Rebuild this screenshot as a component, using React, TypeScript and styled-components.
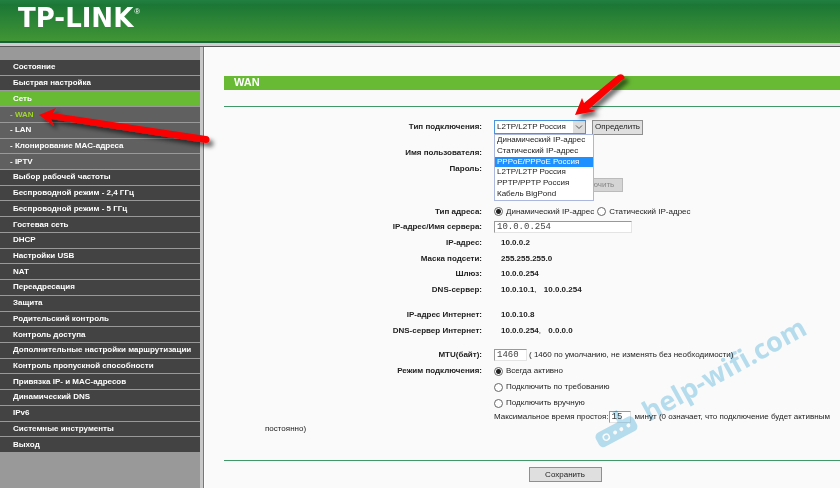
import React from 'react';
import styled, { createGlobalStyle } from 'styled-components';

const GlobalStyle = createGlobalStyle`
  * { box-sizing: border-box; }
  html { overflow: hidden; }
  body { margin: 0; background: #fafafa; color: #222; font: 8px/12px "Liberation Sans", Arial, sans-serif; }
`;

const Page = styled.div`
  position: relative;
  display: flex;
  flex-direction: column;
  min-height: 100vh;
  overflow: hidden;
`;

const Header = styled.header`
  display: flex;
  align-items: flex-start;
  height: 43px;
  padding: 3px 18px;
  background:
    linear-gradient(90deg, #17603a 0, #1b6c3c 40%, transparent 60%) bottom / 100% 2px no-repeat,
    linear-gradient(#228040 0, #1c7736 5px, #439734 100%);
`;

const Logo = styled.div`
  display: flex;
  color: #fff;
  font: bold 26px/30px "DejaVu Sans", Verdana, sans-serif;
`;

const Registered = styled.sup`
  padding: 3px 0 0 1px;
  font: 8px/12px "Liberation Sans", Arial, sans-serif;
`;

const Divider = styled.div`
  height: 4px;
  background: #cfcccf;
  border-bottom: 1px solid #555;
`;

const Body = styled.div`
  display: grid;
  grid-template-columns: 204px minmax(0, 1fr);
  flex: 1;
`;

const Sidebar = styled.nav`
  padding-top: 13px;
  background: #999;
  border-right: 1px solid #777;
  box-shadow: inset -3px 0 #c8c8c8;
`;

const Menu = styled.ul`
  display: grid;
  grid-template-columns: minmax(0, 1fr);
  grid-auto-rows: 1fr;
  row-gap: 1px;
  min-height: 392px;
  margin: 0 3px 0 0;
  padding: 0;
  list-style: none;
`;

const MenuItem = styled.li<{ $kind?: string }>`
  display: flex;
  align-items: center;
  padding-left: ${p => (p.$kind === 'sub' || p.$kind === 'current' ? 10 : 13)}px;
  background: ${p => (p.$kind === 'open' ? '#68b934' : p.$kind ? '#606060' : '#434343')};
`;

const MenuLink = styled.a<{ $current?: boolean }>`
  color: ${p => (p.$current ? '#a0d52c' : '#fff')};
  font-weight: bold;
  text-decoration: none;
  white-space: nowrap;
`;

const Main = styled.main`
  padding: 29px 0 0 19px;
  border-left: 1px solid #fff;
`;

const Title = styled.h1`
  margin: 0;
  height: 14px;
  padding-left: 10px;
  background: #68b934;
  color: #fff;
  font-size: 11px;
  line-height: 13px;
`;

const Rule = styled.hr<{ $gap: number }>`
  height: 1px;
  margin: ${p => p.$gap}px 0 0;
  border: 0;
  background: #3f9866;
`;

const Section = styled.div<{ $height: number; $gap: number }>`
  display: grid;
  grid-auto-rows: 1fr;
  min-height: ${p => p.$height}px;
  margin-top: ${p => p.$gap}px;
`;

const Row = styled.div`
  display: grid;
  grid-template-columns: 258px minmax(0, 1fr);
  column-gap: 12px;
  align-items: center;
`;

const Label = styled.label`
  font-weight: bold;
  text-align: right;
  white-space: nowrap;
`;

const Field = styled.div`
  position: relative;
  display: flex;
  align-items: center;
  white-space: nowrap;
`;

const Value = styled.output<{ $after?: boolean }>`
  padding-left: ${p => (p.$after ? 5 : 7)}px;
  font-weight: bold;
`;

const TypeSelect = styled.div`
  position: relative;
  display: flex;
  margin-right: 6px;
  svg { position: absolute; right: 1px; top: 1px; pointer-events: none; }
`;

const Select = styled.select`
  appearance: none;
  width: 92px;
  height: 14px;
  padding: 0 0 0 2px;
  border: 1px solid #4a94dc;
  border-radius: 0;
  background: #fff;
  color: #222;
  font: inherit;
`;

const Options = styled.ul`
  position: absolute;
  z-index: 2;
  top: 14px;
  left: 0;
  display: grid;
  grid-template-columns: minmax(0, 1fr);
  grid-auto-rows: 1fr;
  width: 100px;
  height: 67px;
  margin: 0;
  padding: 0;
  border: 1px solid #a9b8dc;
  background: #fff;
  list-style: none;
`;

const Option = styled.li<{ $active?: boolean }>`
  padding-left: 2px;
  background: ${p => (p.$active ? '#1e90ff' : '#fff')};
  color: ${p => (p.$active ? '#fff' : '#222')};
  line-height: 10px;
  white-space: nowrap;
`;

const Button = styled.button<{ $width: number }>`
  width: ${p => p.$width}px;
  height: 15px;
  padding: 0;
  border: 1px solid #8f8f8f;
  background: #dfdfdf;
  color: #222;
  font: inherit;
  white-space: nowrap;
  &:disabled { height: 14px; margin-left: 71px; border-color: #bbb; background: #d5d5d5; color: #888; }
`;

const Input = styled.input<{ $width: number }>`
  width: ${p => p.$width}px;
  height: 12px;
  padding: 0 2px;
  border: 1px solid #e4e4e4;
  border-top-color: #999;
  border-left-color: #999;
  background: #fff;
  color: #444;
  font: 9px/10px "Liberation Mono", "Courier New", monospace;
`;

const Choice = styled.label`
  display: inline-flex;
  align-items: center;
  gap: 3px;
  margin-right: 3px;
`;

const Radio = styled.input`
  appearance: none;
  width: 9px;
  height: 9px;
  margin: 0;
  border: 1px solid #666;
  border-radius: 50%;
  background: #fff;
  &:checked { background: radial-gradient(circle, #222 0 2px, #fff 3px); }
`;

const Hint = styled.span`
  padding-left: 2px;
`;

const IdleTime = styled.p`
  margin: 0;
  padding-left: 41px;
  text-indent: 229px;
  input { margin-right: 2px; text-indent: 0; }
`;

const Footer = styled.footer`
  display: flex;
  justify-content: center;
  padding: 6px 0 6px 66px;
`;

const Overlay = styled.svg<{ $left: number; $top: number }>`
  position: absolute;
  left: ${p => p.$left}px;
  top: ${p => p.$top}px;
  pointer-events: none;
  z-index: 3;
`;

const Watermark = styled(Overlay)`
  mix-blend-mode: multiply;
`;

const menu: [string, string?][] = [
  ['Состояние'], ['Быстрая настройка'], ['Сеть', 'open'],
  ['WAN', 'current'], ['LAN', 'sub'], ['Клонирование MAC-адреса', 'sub'], ['IPTV', 'sub'],
  ['Выбор рабочей частоты'], ['Беспроводной режим - 2,4 ГГц'], ['Беспроводной режим - 5 ГГц'],
  ['Гостевая сеть'], ['DHCP'], ['Настройки USB'], ['NAT'], ['Переадресация'], ['Защита'],
  ['Родительский контроль'], ['Контроль доступа'], ['Дополнительные настройки маршрутизации'],
  ['Контроль пропускной способности'], ['Привязка IP- и MAC-адресов'], ['Динамический DNS'],
  ['IPv6'], ['Системные инструменты'], ['Выход'],
];

const types = [
  'Динамический IP-адрес', 'Статический IP-адрес', 'PPPoE/PPPoE Россия',
  'L2TP/L2TP Россия', 'PPTP/PPTP Россия', 'Кабель BigPond',
];

function ReadOnly({ id, label, values }: { id: string; label: string; values: string[] }) {
  return (
    <Row>
      <Label htmlFor={id}>{label}</Label>
      <Field>
        <Value id={id}>{values[0]}</Value>
        {values[1] && <>,&nbsp;<Value $after>{values[1]}</Value></>}
      </Field>
    </Row>
  );
}

export default function App() {
  return (
    <Page>
      <GlobalStyle />
      <Header>
        <Logo>TP-LINK<Registered>®</Registered></Logo>
      </Header>
      <Divider />
      <Body>
        <Sidebar>
          <Menu>
            {menu.map(([name, kind]) => (
              <MenuItem key={name} $kind={kind}>
                <MenuLink href="#" $current={kind === 'current'}>
                  {kind === 'sub' || kind === 'current' ? '- ' : ''}{name}
                </MenuLink>
              </MenuItem>
            ))}
          </Menu>
        </Sidebar>
        <Main>
          <Title>WAN</Title>
          <Rule $gap={16} />
          <Section $height={16} $gap={12}>
            <Row>
              <Label htmlFor="type">Тип подключения:</Label>
              <Field>
                <TypeSelect>
                  <Select id="type" defaultValue={types[3]}>
                    {types.map(t => <option key={t}>{t}</option>)}
                  </Select>
                  <svg width="12" height="12" viewBox="0 0 12 12">
                    <rect width="12" height="12" fill="#ddd" />
                    <path d="M3 4.5 6 7.5 9 4.5" fill="none" stroke="#555" />
                  </svg>
                  <Options>
                    {types.map((t, i) => <Option key={t} $active={i === 2}>{t}</Option>)}
                  </Options>
                </TypeSelect>
                <Button type="button" $width={51}>Определить</Button>
              </Field>
            </Row>
          </Section>
          <Section $height={48} $gap={10}>
            <Row><Label>Имя пользователя:</Label></Row>
            <Row><Label>Пароль:</Label></Row>
            <Row><span /><Field><Button type="button" disabled $width={58}>Отключить</Button></Field></Row>
          </Section>
          <Section $height={94} $gap={11}>
            <Row>
              <Label as="span">Тип адреса:</Label>
              <Field>
                <Choice><Radio type="radio" name="addr" defaultChecked />Динамический IP-адрес</Choice>
                <Choice><Radio type="radio" name="addr" />Статический IP-адрес</Choice>
              </Field>
            </Row>
            <Row>
              <Label htmlFor="server">IP-адрес/Имя сервера:</Label>
              <Field><Input id="server" $width={138} defaultValue="10.0.0.254" /></Field>
            </Row>
            <ReadOnly id="ip" label="IP-адрес:" values={['10.0.0.2']} />
            <ReadOnly id="mask" label="Маска подсети:" values={['255.255.255.0']} />
            <ReadOnly id="gateway" label="Шлюз:" values={['10.0.0.254']} />
            <ReadOnly id="dns" label="DNS-сервер:" values={['10.0.10.1', '10.0.0.254']} />
          </Section>
          <Section $height={32} $gap={9}>
            <ReadOnly id="wan-ip" label="IP-адрес Интернет:" values={['10.0.10.8']} />
            <ReadOnly id="wan-dns" label="DNS-сервер Интернет:" values={['10.0.0.254', '0.0.0.0']} />
          </Section>
          <Section $height={64} $gap={8}>
            <Row>
              <Label htmlFor="mtu">MTU(байт):</Label>
              <Field>
                <Input id="mtu" $width={33} defaultValue="1460" />
                <Hint>( 1460 по умолчанию, не изменять без необходимости)</Hint>
              </Field>
            </Row>
            <Row>
              <Label as="span">Режим подключения:</Label>
              <Field><Choice><Radio type="radio" name="mode" defaultChecked />Всегда активно</Choice></Field>
            </Row>
            <Row><span /><Field><Choice><Radio type="radio" name="mode" />Подключить по требованию</Choice></Field></Row>
            <Row><span /><Field><Choice><Radio type="radio" name="mode" />Подключить вручную</Choice></Field></Row>
          </Section>
          <IdleTime>
            <label htmlFor="idle">Максимальное время простоя:</label>
            <Input id="idle" $width={22} defaultValue="15" />
            <Hint>минут (0 означает, что подключение будет активным постоянно)</Hint>
          </IdleTime>
          <Rule $gap={25} />
          <Footer><Button type="button" $width={73}>Сохранить</Button></Footer>
        </Main>
      </Body>
      <Watermark $left={590} $top={310} width="240" height="150" viewBox="590 310 240 150" fill="#b9e1f2">
        <g transform="rotate(-28 616 432)">
          <rect x="595" y="424" width="43" height="16" rx="5" />
          <path d="M622 413v12h5v-12z" />
          <circle cx="605" cy="432" r="3" fill="none" stroke="#fff" strokeWidth="1.5" />
          <circle cx="615" cy="432" r="2" fill="#fff" />
          <circle cx="622" cy="432" r="2" fill="#fff" />
          <circle cx="630" cy="432" r="2" fill="#fff" />
        </g>
        <text transform="translate(649 422) rotate(-29)" fontFamily="Open Sans, sans-serif" fontWeight="700" fontSize="27">help-wifi.com</text>
      </Watermark>
      <Overlay $left={30} $top={65} width="610" height="100" viewBox="30 65 610 100">
        <defs>
          <filter id="shadow" x="-20%" y="-20%" width="150%" height="170%">
            <feDropShadow dx="4" dy="4" stdDeviation="2" floodColor="#000" floodOpacity="0.55" />
          </filter>
        </defs>
        <g fill="#fb0000" filter="url(#shadow)">
          <path d="M39 115 56 108 53 113 206 136A3 3 0 0 1 206 143L51 119 54 126Z" />
          <path d="M575 115 582 98 584 103 618 75Q622 73 624 76T622 80L589 109 596 111Z" />
        </g>
      </Overlay>
    </Page>
  );
}
